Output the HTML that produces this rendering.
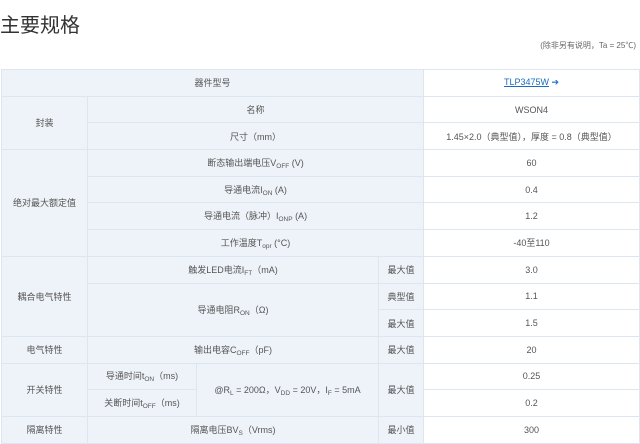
<!DOCTYPE html>
<html><head><meta charset="utf-8"><style>
body{margin:0;background:#fff;width:640px;height:443px;overflow:hidden;font-family:"Liberation Sans","Noto Sans CJK SC",sans-serif;color:#555;}
h1{position:absolute;left:0;top:9px;margin:0;font-size:20px;font-weight:normal;color:#333;}
.note{position:absolute;right:4px;top:40px;font-size:8px;color:#666;}
table{position:absolute;left:1px;top:69px;width:638px;border-collapse:collapse;table-layout:fixed;font-size:9px;}
td{border:1px solid #dde5ee;height:25.7px;padding:0;text-align:center;vertical-align:middle;background:#eef3f9;}
td.v{background:#fff;}
sub{font-size:6.5px;vertical-align:-2px;}
a{color:#1b6cc0;text-decoration:underline;}
</style></head><body>
<h1>主要规格</h1>
<div class="note">(除非另有说明，Ta = 25℃)</div>
<table>
<colgroup><col style="width:86px"><col style="width:109px"><col style="width:182px"><col style="width:45px"><col style="width:216px"></colgroup>
<tr><td colspan="4">器件型号</td><td class="v"><a>TLP3475W</a> <span style="color:#1b6cc0">➔</span></td></tr>
<tr><td rowspan="2">封装</td><td colspan="3">名称</td><td class="v">WSON4</td></tr>
<tr><td colspan="3">尺寸（mm）</td><td class="v">1.45×2.0（典型值），厚度 = 0.8（典型值）</td></tr>
<tr><td rowspan="4">绝对最大额定值</td><td colspan="3">断态输出端电压V<sub>OFF</sub> (V)</td><td class="v">60</td></tr>
<tr><td colspan="3">导通电流I<sub>ON</sub> (A)</td><td class="v">0.4</td></tr>
<tr><td colspan="3">导通电流（脉冲）I<sub>ONP</sub> (A)</td><td class="v">1.2</td></tr>
<tr><td colspan="3">工作温度T<sub>opr</sub> (°C)</td><td class="v">-40至110</td></tr>
<tr><td rowspan="3">耦合电气特性</td><td colspan="2">触发LED电流I<sub>FT</sub>（mA)</td><td>最大值</td><td class="v">3.0</td></tr>
<tr><td colspan="2" rowspan="2">导通电阻R<sub>ON</sub>（Ω)</td><td>典型值</td><td class="v">1.1</td></tr>
<tr><td>最大值</td><td class="v">1.5</td></tr>
<tr><td>电气特性</td><td colspan="2">输出电容C<sub>OFF</sub>（pF)</td><td>最大值</td><td class="v">20</td></tr>
<tr><td rowspan="2">开关特性</td><td>导通时间t<sub>ON</sub>（ms)</td><td rowspan="2">@R<sub>L</sub> = 200Ω，V<sub>DD</sub> = 20V，I<sub>F</sub> = 5mA</td><td rowspan="2">最大值</td><td class="v">0.25</td></tr>
<tr><td>关断时间t<sub>OFF</sub>（ms)</td><td class="v">0.2</td></tr>
<tr><td>隔离特性</td><td colspan="2">隔离电压BV<sub>S</sub>（Vrms)</td><td>最小值</td><td class="v">300</td></tr>
</table>
</body></html>
